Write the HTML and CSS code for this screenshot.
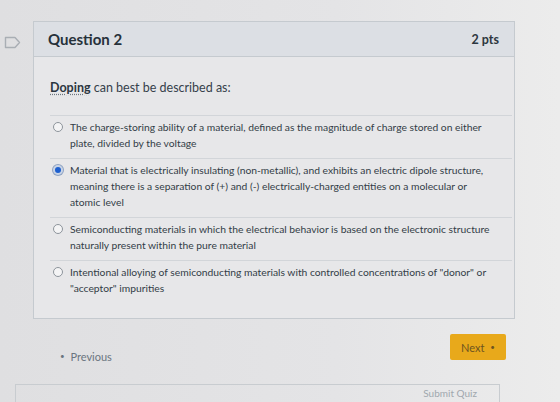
FILE: index.html
```html
<!DOCTYPE html>
<html>
<head>
    <title>Quiz - Question 2</title>
    <link rel="stylesheet" href="styles.css">
</head>
<body>
    <div class="quiz">
        <div class="question-row">
            <div class="gutter">
                <svg class="flag" width="17" height="13" viewBox="0 0 17 13">
                    <path d="M1.5 1.5 H11 L15.5 6.5 L11 11.5 H1.5 Z" fill="none" stroke="#a9aeb4" stroke-width="1.4" stroke-linejoin="round"/>
                </svg>
            </div>
            <div class="question">
                <div class="question-header">
                    <span class="question-title">Question 2</span>
                    <span class="question-points">2 pts</span>
                </div>
                <div class="question-body">
                    <p class="question-text"><b class="term">Doping</b> can best be described as:</p>
                    <div class="answers">
                        <label class="answer">
                            <span class="radio"></span>
                            <span class="answer-text">The charge-storing ability of a material, defined as the magnitude of charge stored on either plate, divided by the voltage</span>
                        </label>
                        <label class="answer">
                            <span class="radio checked"></span>
                            <span class="answer-text">Material that is electrically insulating (non-metallic), and exhibits an electric dipole structure, meaning there is a separation of (+) and (-) electrically-charged entities on a molecular or atomic level</span>
                        </label>
                        <label class="answer">
                            <span class="radio"></span>
                            <span class="answer-text">Semiconducting materials in which the electrical behavior is based on the electronic structure naturally present within the pure material</span>
                        </label>
                        <label class="answer">
                            <span class="radio"></span>
                            <span class="answer-text">Intentional alloying of semiconducting materials with controlled concentrations of "donor" or "acceptor" impurities</span>
                        </label>
                    </div>
                </div>
            </div>
        </div>

        <div class="nav">
            <a class="prev"><span class="dot">&bull;</span> Previous</a>
            <button class="next">Next <span class="dot">&bull;</span></button>
        </div>

        <div class="submit-box">
            <span class="submit-text">Submit Quiz</span>
        </div>
    </div>
</body>
</html>
```

FILE: styles.css
```css
* {
    margin: 0;
    padding: 0;
    box-sizing: border-box;
}

body {
    background: linear-gradient(90deg, #dfdfe1 0%, #e4e4e6 60%, #ececec 100%);
    font-family: Lato, "Open Sans", sans-serif;
    color: #2d3b45;
    height: 402px;
    overflow: hidden;
}

.quiz {
    padding-top: 21px;
}

.question-row {
    display: flex;
}

.gutter {
    width: 33px;
    padding: 12px 0 0 4px;
}

.question {
    width: 482px;
    border: 1px solid #c5cacf;
    background: #e7e7e9;
}

.question-header {
    height: 35px;
    display: flex;
    justify-content: space-between;
    align-items: center;
    padding: 0 15px 0 14px;
    background: #dcdfe4;
    border-bottom: 1px solid #c5cacf;
}

.question-title {
    font-size: 15px;
    font-weight: 700;
    color: #26313a;
}

.question-points {
    font-size: 12.5px;
    font-weight: 700;
    color: #2d3740;
}

.question-body {
    padding: 23px 2px 15px 16px;
}

.question-text {
    font-size: 12.5px;
    line-height: 16px;
    color: #36414b;
}

.term {
    color: #2b3640;
    text-decoration: underline dotted #6d7780;
    text-underline-offset: 2px;
}

.answers {
    margin-top: 19px;
}

.answer {
    display: flex;
    gap: 7px;
    padding: 3px 22px 7px 3px;
    border-top: 1px solid #d2d5d9;
    font-size: 10.3px;
    line-height: 16px;
    color: #333d47;
}

.radio {
    flex: none;
    width: 10px;
    height: 10px;
    margin-top: 3px;
    border: 1px solid #8d949b;
    border-radius: 50%;
    background: #f4f4f5;
}

.radio.checked {
    border: 2px solid #c9d4e6;
    background: #1d5fcf;
    box-shadow: 0 0 0 1px #8fa3c2;
}

.nav {
    display: flex;
    justify-content: space-between;
    align-items: flex-end;
    padding: 15px 0 0 60px;
    width: 506px;
}

.prev {
    font-size: 11px;
    color: #6a7580;
    margin-bottom: -3px;
}

.prev .dot {
    font-size: 8px;
    margin-right: 3px;
    vertical-align: 2px;
}

.next {
    width: 56px;
    height: 26px;
    border: none;
    border-radius: 2px;
    background: #e8a91b;
    color: #6e5420;
    font-family: Lato, "Open Sans", sans-serif;
    font-size: 11px;
}

.next .dot {
    font-size: 8px;
    margin-left: 3px;
    vertical-align: 2px;
}

.submit-box {
    margin: 24px 0 0 15px;
    width: 485px;
    height: 30px;
    border: 1px solid #c8ccd0;
    display: flex;
    justify-content: flex-end;
    padding: 2px 22px 0 0;
}

.submit-text {
    font-size: 10px;
    line-height: 12px;
    color: #a0a7ae;
}
```
